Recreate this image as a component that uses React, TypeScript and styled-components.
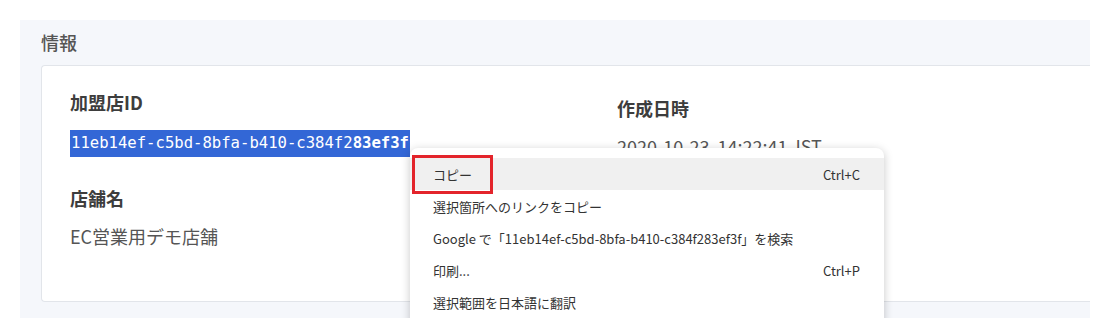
import React from 'react'
import styled, { createGlobalStyle } from 'styled-components'

const GlobalStyle = createGlobalStyle`
    html, body {
        margin: 0;
        padding: 0;
        background: #ffffff;
        overflow: hidden;
    }
    body {
        font-family: "Noto Sans CJK JP", "Noto Sans", sans-serif;
        color: #555;
    }
`

const Page = styled.div`
    position: relative;
    width: 1110px;
    height: 318px;
    padding: 20px 0 0 20px;
    box-sizing: border-box;
    overflow: hidden;
`

const Section = styled.section`
    width: 1070px;
    height: 320px;
    background: #f5f7fb;
    overflow: hidden;
`

const SectionTitle = styled.h2`
    margin: 0;
    height: 45px;
    padding-left: 21px;
    font-size: 18px;
    line-height: 45px;
    font-weight: 500;
    color: #555;
`

const Card = styled.div`
    box-sizing: border-box;
    margin-left: 21px;
    height: 237px;
    background: #ffffff;
    border: 1px solid #e2e5ea;
    border-right: none;
    border-radius: 4px 0 0 4px;
    display: grid;
    grid-template-columns: 547px 1fr;
    padding: 24px 0 0 28px;
`

const Column = styled.div<{ $offset?: number }>`
    display: flex;
    flex-direction: column;
    padding-top: ${(p) => p.$offset ?? 0}px;
`

const Field = styled.div`
    display: flex;
    flex-direction: column;
    align-items: flex-start;
    margin-bottom: 29px;
`

const Label = styled.div<{ $gap?: number }>`
    font-size: 18px;
    line-height: 24px;
    font-weight: 700;
    color: #3d3d3d;
    margin-bottom: ${(p) => p.$gap ?? 14}px;
`

const Value = styled.div`
    font-size: 18px;
    line-height: 24px;
    color: #555;
`

const SelectedId = styled.span`
    display: inline-block;
    height: 27px;
    line-height: 27px;
    padding: 0 1px;
    background: #3367d6;
    color: #ffffff;
    font-family: "DejaVu Sans Mono", "Liberation Mono", monospace;
    font-size: 15.6px;
    b {
        font-weight: 700;
    }
`

const Menu = styled.div`
    position: absolute;
    left: 410px;
    top: 148px;
    width: 474px;
    height: 200px;
    padding-top: 10px;
    box-sizing: border-box;
    background: #ffffff;
    border-radius: 8px;
    box-shadow: 0 2px 10px rgba(0, 0, 0, 0.22);
`

const MenuItem = styled.div<{ $active?: boolean }>`
    display: flex;
    align-items: center;
    justify-content: space-between;
    height: 32px;
    padding: 0 24px 0 23px;
    font-size: 13px;
    color: #333;
    background: ${(p) => (p.$active ? '#f0f0f0' : 'transparent')};
`

const Shortcut = styled.span`
    color: #333;
`

const Highlight = styled.div`
    position: absolute;
    left: 2px;
    top: 7px;
    width: 81px;
    height: 39px;
    box-sizing: border-box;
    border: 3px solid #e3242b;
`

const items = [
    { label: 'コピー', shortcut: 'Ctrl+C', active: true },
    { label: '選択箇所へのリンクをコピー' },
    { label: 'Google で「11eb14ef-c5bd-8bfa-b410-c384f283ef3f」を検索' },
    { label: '印刷...', shortcut: 'Ctrl+P' },
    { label: '選択範囲を日本語に翻訳' },
]

const App: React.FC = () => {
    return (
        <>
            <GlobalStyle />
            <Page>
                <Section>
                    <SectionTitle>情報</SectionTitle>
                    <Card>
                        <Column>
                            <Field>
                                <Label $gap={16}>加盟店ID</Label>
                                <SelectedId>
                                    11eb14ef-c5bd-8bfa-b410-c384f2<b>83ef3f</b>
                                </SelectedId>
                            </Field>
                            <Field>
                                <Label>店舗名</Label>
                                <Value>EC営業用デモ店舗</Value>
                            </Field>
                        </Column>
                        <Column $offset={6}>
                            <Field>
                                <Label>作成日時</Label>
                                <Value>2020-10-23&nbsp; 14:22:41&nbsp; IST</Value>
                            </Field>
                        </Column>
                    </Card>
                </Section>
                <Menu>
                    {items.map((item) => (
                        <MenuItem key={item.label} $active={item.active}>
                            <span>{item.label}</span>
                            {item.shortcut && <Shortcut>{item.shortcut}</Shortcut>}
                        </MenuItem>
                    ))}
                    <Highlight />
                </Menu>
            </Page>
        </>
    )
}

export default App
